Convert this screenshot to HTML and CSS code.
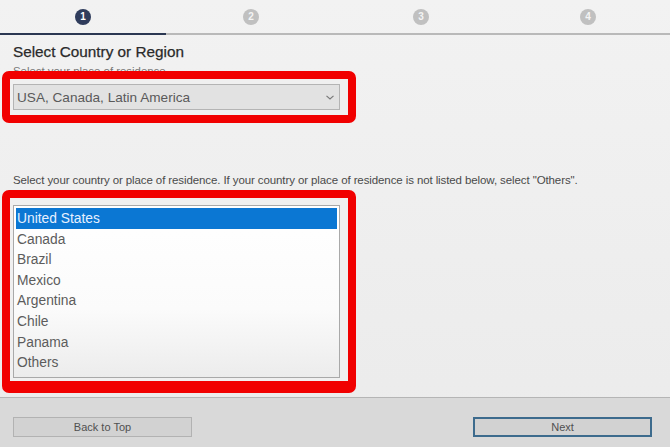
FILE: index.html
```html
<!DOCTYPE html>
<html lang="en">
<head>
  <meta charset="UTF-8">
  <meta name="viewport" content="width=device-width, initial-scale=1.0">
  <title>Select Country or Region</title>
  <link rel="stylesheet" href="styles.css">
</head>
<body>
  <div class="page">
    <div class="steps">
      <div class="step active"><span class="num">1</span></div>
      <div class="step"><span class="num">2</span></div>
      <div class="step"><span class="num">3</span></div>
      <div class="step"><span class="num">4</span></div>
    </div>

    <div class="content">
      <h1 class="title">Select Country or Region</h1>
      <p class="subtitle">Select your place of residence.</p>

      <div class="highlight region">
        <div class="dropdown">
          <span>USA, Canada, Latin America</span>
          <svg class="chevron" width="8" height="5" viewBox="0 0 8 5"><path d="M0.5 0.8 L4 4 L7.5 0.8" fill="none" stroke="#777" stroke-width="1.1"/></svg>
        </div>
      </div>

      <p class="hint">Select your country or place of residence. If your country or place of residence is not listed below, select "Others".</p>

      <div class="highlight countries">
        <ul class="listbox">
          <li class="selected">United States</li>
          <li>Canada</li>
          <li>Brazil</li>
          <li>Mexico</li>
          <li>Argentina</li>
          <li>Chile</li>
          <li>Panama</li>
          <li>Others</li>
        </ul>
      </div>
    </div>

    <div class="footer">
      <button class="btn">Back to Top</button>
      <button class="btn next">Next</button>
    </div>
  </div>
</body>
</html>
```

FILE: styles.css
```css
body {
  margin: 0;
  padding: 0;
  font-family: "Liberation Sans", Arial, sans-serif;
  background: #efefef;
}
.page {
  height: 447px;
  display: flex;
  flex-direction: column;
  background: linear-gradient(#f2f2f2, #ebebeb);
}
.steps {
  display: grid;
  grid-template-columns: 166px 170px 170px 1fr;
  height: 33px;
  border-bottom: 2px solid #b9b9b9;
}
.step {
  display: flex;
  justify-content: center;
  align-items: flex-start;
  padding-top: 9px;
  margin-bottom: -2px;
  border-bottom: 2px solid transparent;
}
.step.active {
  border-bottom-color: #2b3752;
}
.num {
  width: 16px;
  height: 16px;
  border-radius: 50%;
  background: #c0c0c0;
  color: #f4f4f4;
  font-size: 10px;
  font-weight: bold;
  line-height: 16px;
  text-align: center;
}
.step.active .num {
  background: #2f3c5c;
  color: #fff;
}
.content {
  padding: 8px 13px 0;
}
.title {
  margin: 0;
  font-size: 15.3px;
  line-height: 18px;
  font-weight: normal;
  color: #2a2a2a;
  -webkit-text-stroke: 0.25px #2a2a2a;
}
.subtitle {
  margin: 4px 0 0;
  font-size: 11.4px;
  line-height: 12px;
  color: #777;
}
.highlight {
  position: relative;
  box-sizing: border-box;
  width: 354px;
  margin-left: -11px;
  border: 8px solid #f10000;
  border-radius: 7px;
  padding: 5px 8px 5px 3px;
  background: #f0f0f0;
}
.region {
  margin-top: -6px;
}
.dropdown {
  box-sizing: border-box;
  height: 26px;
  display: flex;
  align-items: center;
  justify-content: space-between;
  padding: 1px 5px 0 3px;
  background: #e2e2e2;
  border: 1px solid #b4b4b4;
  font-size: 13.6px;
  color: #5a5a5a;
}
.hint {
  margin: 50px 0 0;
  font-size: 11.5px;
  line-height: 14px;
  color: #4a4a4a;
  letter-spacing: -0.1px;
}
.countries {
  margin-top: 3px;
  padding: 7px 8px 3px 3px;
  border-bottom-width: 12px;
}
.listbox {
  list-style: none;
  margin: 0;
  padding: 2px 2px 4px;
  border: 1px solid #a9a9a9;
  background: linear-gradient(#ffffff, #fbfbfb 60%, #ececec);
}
.listbox li {
  height: 20.6px;
  line-height: 21px;
  padding-left: 1px;
  font-size: 13.8px;
  color: #5c5c5c;
}
.listbox li.selected {
  background: #0b77d3;
  color: #e6f0ff;
}
.footer {
  margin-top: auto;
  height: 50px;
  border-top: 1px solid #b5b5b5;
  background: #d9d9d9;
  display: flex;
  justify-content: space-between;
  align-items: flex-start;
  padding: 19px 18px 0 13px;
  box-sizing: border-box;
}
.btn {
  width: 179px;
  height: 20px;
  padding: 0;
  background: #d2d2d2;
  border: 1px solid #b2b2b2;
  font-family: "Liberation Sans", Arial, sans-serif;
  font-size: 11px;
  color: #505050;
}
.btn.next {
  border: 2px solid #3d6b8d;
}
```
